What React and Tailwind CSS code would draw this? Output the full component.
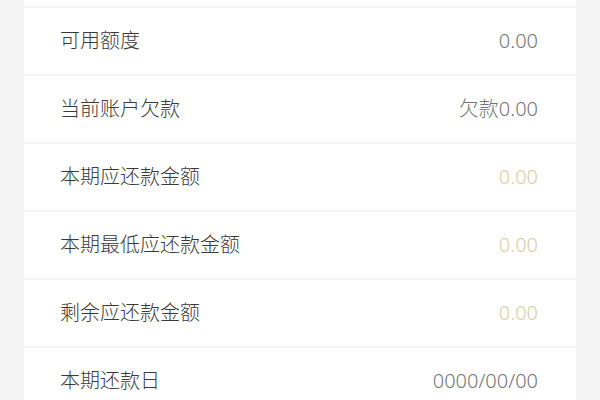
const rows = [
    { label: "可用额度", value: "0.00" },
    { label: "当前账户欠款", value: "欠款0.00" },
    { label: "本期应还款金额", value: "0.00", gold: true },
    { label: "本期最低应还款金额", value: "0.00", gold: true },
    { label: "剩余应还款金额", value: "0.00", gold: true },
    { label: "本期还款日", value: "0000/00/00" },
];

const App = () => {
    return (
        <div className="h-[400px] overflow-hidden bg-[#f3f3f3] px-[24px] font-['Noto_Sans','Noto_Sans_CJK_SC',sans-serif] font-light">
            <div className="bg-white h-full">
                <div className="h-[6px] border-b-2 border-[#f5f5f5] box-content"></div>
                {
                    rows.map(row => (
                        <div key={row.label} className="h-[68px] border-b-2 border-[#f5f5f5] flex items-center justify-between pl-[36px] pr-[38px] text-[20px]">
                            <span className="text-[#3a3a3a]">{row.label}</span>
                            <span className={row.gold ? "text-[#dccb9e]" : "text-[#747474]"}>{row.value}</span>
                        </div>
                    ))
                }
            </div>
        </div>
    );
};

export default App;
